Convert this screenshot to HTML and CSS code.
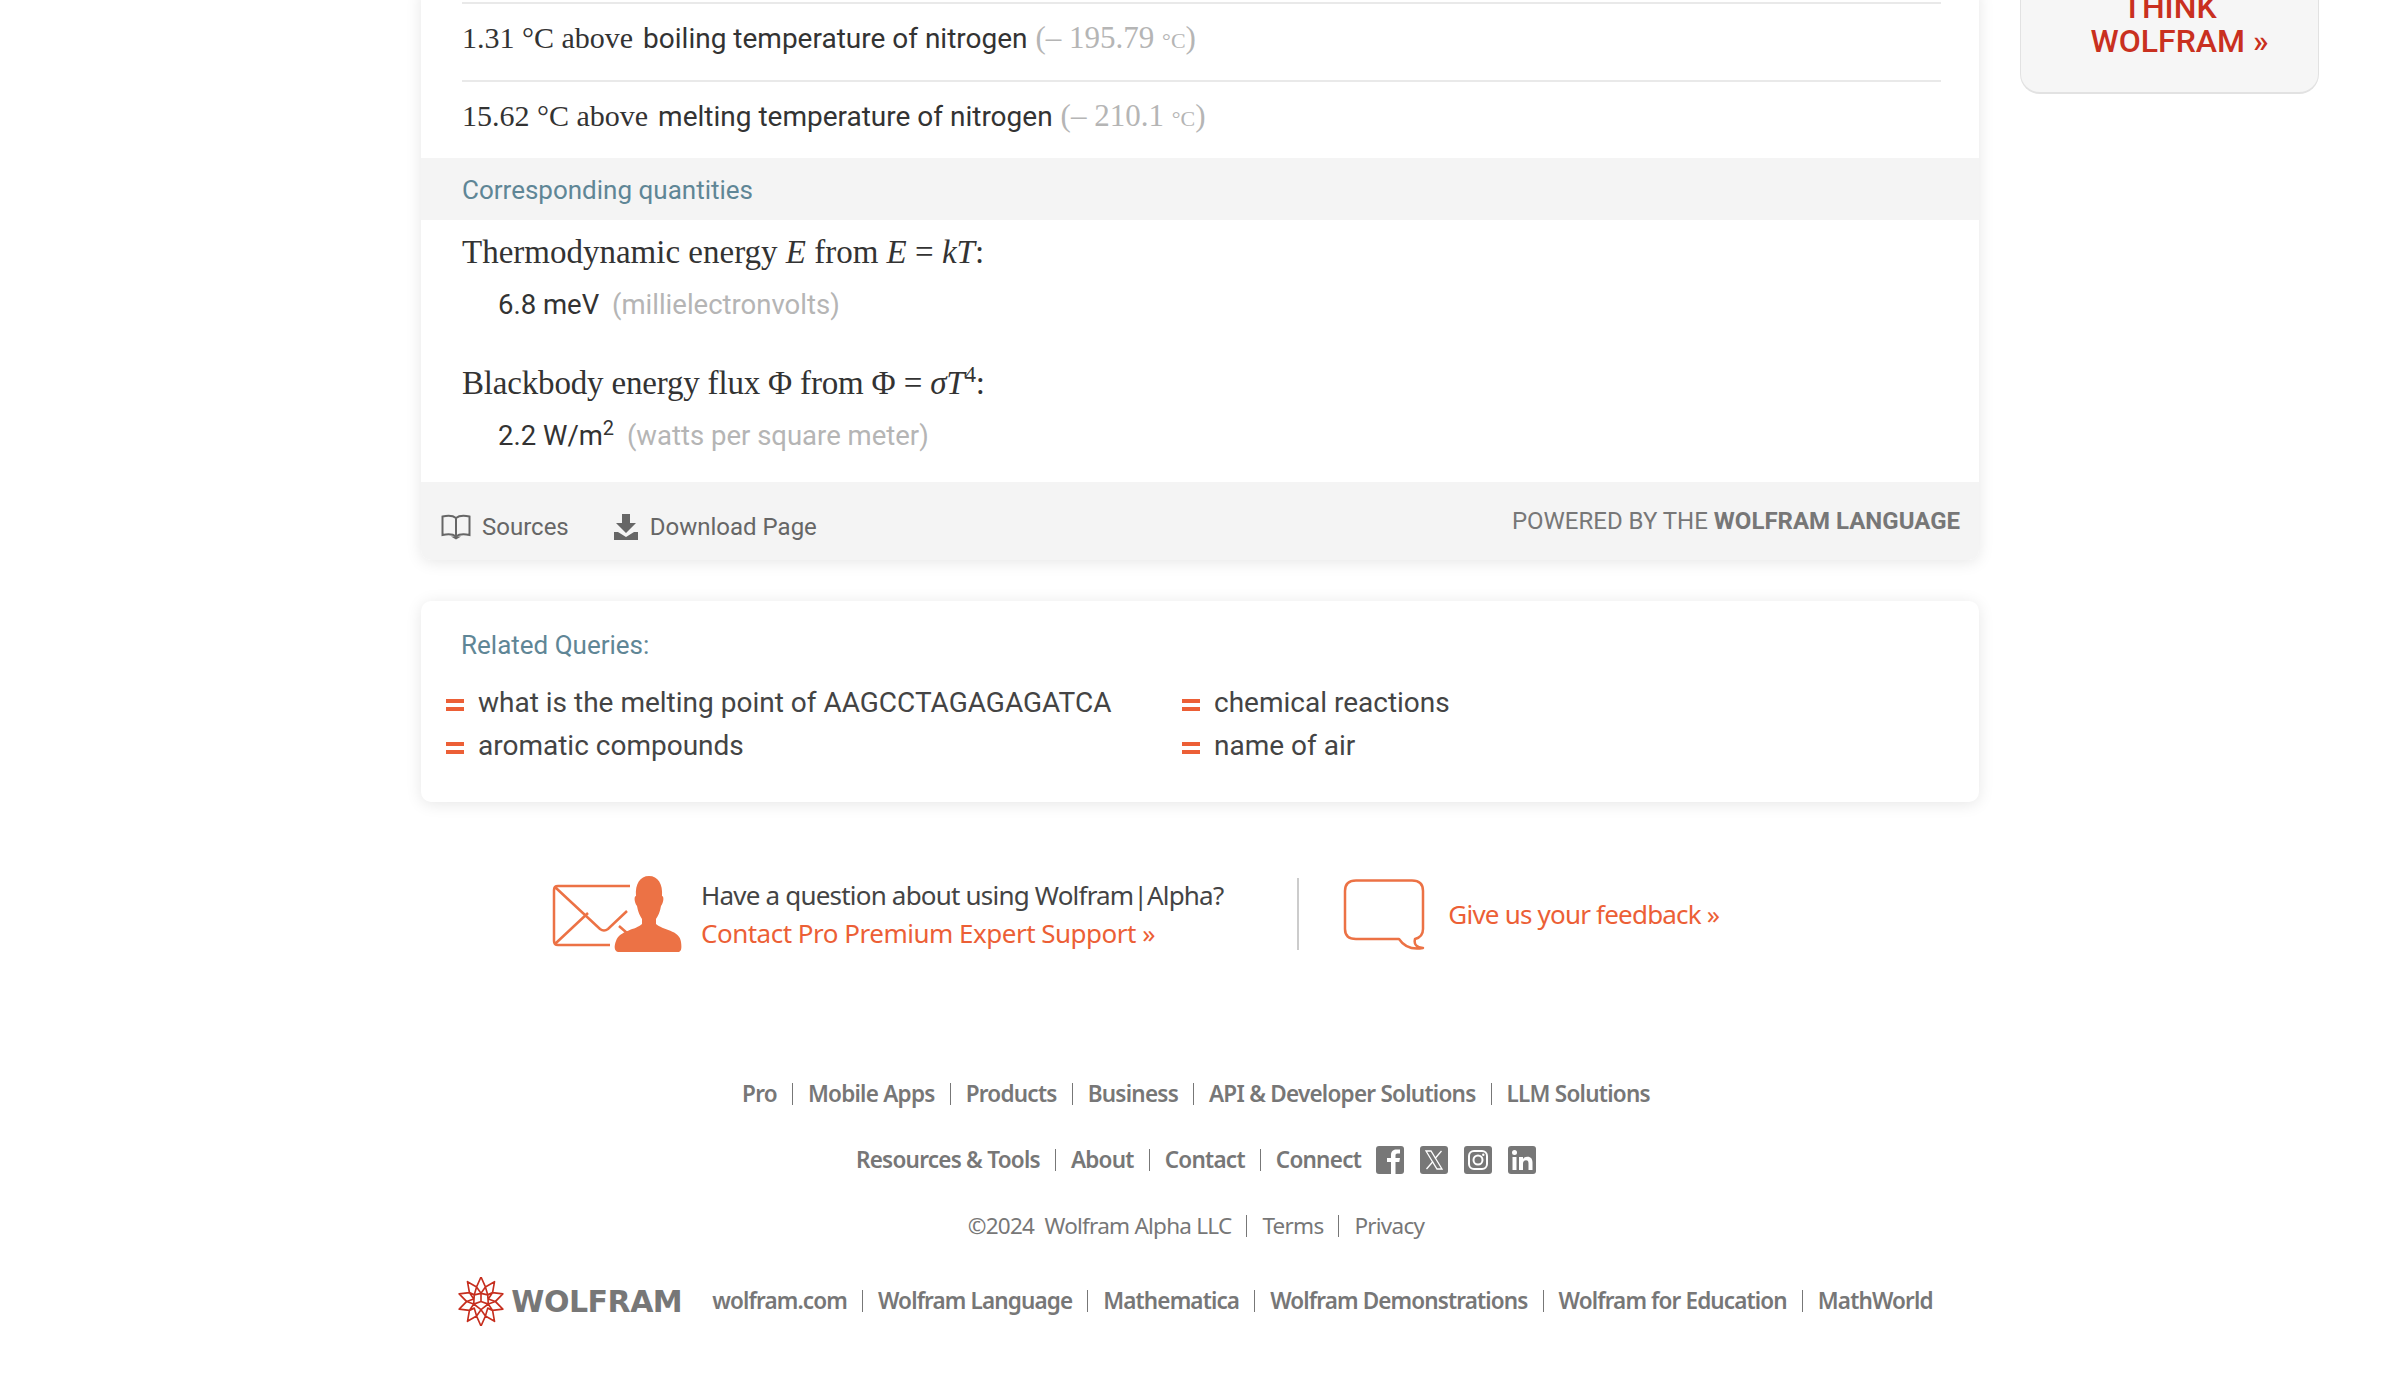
FILE: index.html
```html
<!DOCTYPE html>
<html lang="en">
<head>
  <meta charset="UTF-8">
  <title>Wolfram|Alpha</title>
  <link rel="stylesheet" href="styles.css">
</head>
<body>
  <div class="page">
    <div class="content">
      <main class="pod">
        <div class="rows">
          <p class="row"><span class="serif lead">1.31 °C above</span> boiling temperature of nitrogen <span class="serif muted">(– 195.79 <span class="unit">°C</span>)</span></p>
          <p class="row"><span class="serif lead">15.62 °C above</span> melting temperature of nitrogen <span class="serif muted">(– 210.1 <span class="unit">°C</span>)</span></p>
        </div>
        <h3 class="pod-title">Corresponding quantities</h3>
        <div class="quantities">
          <p class="formula">Thermodynamic energy <i>E</i> from <i>E</i> = <i>kT</i>:</p>
          <p class="value">6.8 meV <span class="muted">(millielectronvolts)</span></p>
          <p class="formula formula-next">Blackbody energy flux Φ from Φ = <i>σT</i><sup>4</sup>:</p>
          <p class="value">2.2 W/m<sup>2</sup> <span class="muted">(watts per square meter)</span></p>
        </div>
        <div class="pod-foot">
          <a class="foot-link">
            <svg width="30" height="26" viewBox="0 0 30 26"><path d="M15 4C12 1.500 6 1.500 1.500 2.500V21C6 20 12 20 15 22.500C18 20 24 20 28.500 21V2.500C24 1.500 18 1.500 15 4ZM15 4V22.500" fill="none" stroke="#666" stroke-width="2"/><path d="M10 22.500H20L15 25.500Z" fill="#666"/></svg>
            Sources
          </a>
          <a class="foot-link">
            <svg width="26" height="26" viewBox="0 0 26 26"><path d="M9 0H17V9H23L13 19L3 9H9Z M1 18H5L13 23L21 18H25V26H1Z" fill="#666"/></svg>
            Download Page
          </a>
          <span class="powered">POWERED BY THE <b>WOLFRAM LANGUAGE</b></span>
        </div>
      </main>

      <section class="related">
        <h3 class="related-title">Related Queries:</h3>
        <ul class="related-list">
          <li>what is the melting point of AAGCCTAGAGAGATCA</li>
          <li>chemical reactions</li>
          <li>aromatic compounds</li>
          <li>name of air</li>
        </ul>
      </section>

      <section class="support">
        <svg class="support-icon" width="130" height="77" viewBox="0 0 130 77">
          <path d="M78 10H6Q2 10 2 14V65Q2 69 6 69H58M4 12L48 53Q52 56 56 53L75 35M4 67L36 37M67 50L75 57" fill="none" stroke="#ec7245" stroke-width="2.500"/>
          <path d="M97 0C106 0 111 8 110 20C112 20 112 26 109 30C108 36 106 40 104 43V48C110 54 128 54 129 66C130 73 129 75 127 76H66C62 75 62 70 64 65C68 54 84 54 90 48V43C88 40 86 36 85 30C82 26 82 20 84 20C83 8 88 0 97 0Z" fill="#ec7245"/>
        </svg>
        <div class="support-text">
          <p>Have a question about using Wolfram|Alpha?</p>
          <a>Contact Pro Premium Expert Support »</a>
        </div>
        <div class="support-rule"></div>
        <svg class="bubble" width="82" height="71" viewBox="0 0 82 71">
          <path d="M13 1.500H69Q80 1.500 80 12V50Q80 58 72 60Q70 68 80 69Q64 72 56 60H13Q2 60 2 50V12Q2 1.500 13 1.500Z" fill="none" stroke="#ec7245" stroke-width="2.500" stroke-linejoin="round"/>
        </svg>
        <a class="feedback">Give us your feedback »</a>
      </section>

      <footer class="site-foot">
        <nav class="foot-line strong">
          <a>Pro</a><a>Mobile Apps</a><a>Products</a><a>Business</a><a>API &amp; Developer Solutions</a><a>LLM Solutions</a>
        </nav>
        <nav class="foot-line strong">
          <a>Resources &amp; Tools</a><a>About</a><a>Contact</a><a>Connect</a>
          <span class="social">
            <svg width="28" height="28" viewBox="0 0 28 28"><rect width="28" height="28" rx="3" fill="#777"/><path d="M15 28V16H11V12H15V9C15 5 17.500 3.500 20.500 3.500H24V7.500H21.500C20 7.500 19.500 8.200 19.500 9.500V12H24L23.300 16H19.500V28Z" fill="#fff"/></svg>
            <svg width="28" height="28" viewBox="0 0 28 28"><rect width="28" height="28" rx="3" fill="#777"/><path d="M6 5H11L22 23H17Z" fill="none" stroke="#fff" stroke-width="1.300"/><path d="M21.500 5L15 12.500M13 15.500L6.500 23" stroke="#fff" stroke-width="1.300"/></svg>
            <svg width="28" height="28" viewBox="0 0 28 28"><rect width="28" height="28" rx="3" fill="#777"/><rect x="5" y="5" width="18" height="18" rx="5" fill="none" stroke="#fff" stroke-width="2"/><circle cx="14" cy="14" r="4.500" fill="none" stroke="#fff" stroke-width="2"/><circle cx="19.300" cy="8.700" r="1.200" fill="#fff"/></svg>
            <svg width="28" height="28" viewBox="0 0 28 28"><rect width="28" height="28" rx="3" fill="#777"/><circle cx="6.500" cy="6.500" r="2.500" fill="#fff"/><path d="M4.500 11H8.500V24H4.500ZM11 11H15V13C16 11.500 17.500 10.700 19.500 10.700C23 10.700 24.500 13 24.500 16.500V24H20.500V17.500C20.500 15.500 19.800 14.300 18 14.300C16 14.300 15 15.700 15 17.500V24H11Z" fill="#fff"/></svg>
          </span>
        </nav>
        <nav class="foot-line">
          <span>©2024&nbsp; Wolfram Alpha LLC</span><a>Terms</a><a>Privacy</a>
        </nav>
        <nav class="foot-line strong brand-line">
          <span class="brand">
            <svg width="46" height="49" viewBox="0 0 48 48" preserveAspectRatio="none">
              <path d="M24 0L28.600 9.700L38.100 4.600L36.100 15.200L46.800 16.600L39 24L46.800 31.400L36.100 32.800L38.100 43.400L28.600 38.300L24 48L19.400 38.300L9.900 43.400L11.900 32.800L1.200 31.400L9 24L1.200 16.600L11.900 15.200L9.900 4.600L19.400 9.700Z M19.400 9.700L24 16L28.600 9.700 M28.600 9.700L31 17.500L36.100 15.200 M36.100 15.200L31.600 21.500L39 24L31.600 26.500L36.100 32.800L31 30.500L28.600 38.300L24 32L19.400 38.300L17 30.500L11.900 32.800L16.400 26.500L9 24L16.400 21.500L11.900 15.200L17 17.500L19.400 9.700 M24 16L31 17.500L31.600 26.500L24 32L16.400 26.500L17 17.500Z M24 16V24L31.600 26.500 M24 24L16.400 26.500" fill="none" stroke="#c62e1e" stroke-width="1.700" stroke-linejoin="round"/>
            </svg>
            <span class="brand-name">WOLFRAM</span>
          </span>
          <a>wolfram.com</a><a>Wolfram Language</a><a>Mathematica</a><a>Wolfram Demonstrations</a><a>Wolfram for Education</a><a>MathWorld</a>
        </nav>
      </footer>
    </div>

    <aside class="promo">
      <a>THINK<br><span class="promo-line">WOLFRAM »</span></a>
    </aside>
  </div>
</body>
</html>
```

FILE: styles.css
```css
html, body {
  margin: 0;
  height: 1398px;
  overflow: hidden;
  background: #fff;
}
body {
  font-family: Roboto, sans-serif;
  color: #333;
}
p, h3, ul {
  margin: 0;
  padding: 0;
}
a {
  color: inherit;
  text-decoration: none;
}

.page {
  display: flex;
  align-items: flex-start;
  margin-top: -10px;
  padding-left: 421px;
}
.content {
  width: 1558px;
}

/* result pod */
.pod {
  background: #fff;
  border-radius: 0 0 10px 10px;
  box-shadow: 0 2px 16px rgba(0, 0, 0, 0.1);
}
.rows {
  padding: 12px 38px 0 41px;
}
.row {
  height: 76px;
  border-top: 2px solid #e9e9e9;
  font-size: 28px;
  line-height: 68px;
  color: #333;
  white-space: nowrap;
}
.serif {
  font-family: "Liberation Serif", serif;
  font-size: 30px;
}
.lead {
  margin-right: 3px;
}
.muted {
  color: #b5b5b5;
}
.row .muted {
  margin-left: 1px;
  font-size: 31px;
}
.row .unit {
  font-size: 22px;
}
.pod-title {
  height: 62px;
  padding-left: 41px;
  background: #f4f4f4;
  font-size: 26px;
  font-weight: 400;
  line-height: 64px;
  color: #5f8696;
}
.quantities {
  height: 262px;
  padding: 12px 41px 0;
  box-sizing: border-box;
}
.formula {
  height: 40px;
  font-family: "Liberation Serif", serif;
  font-size: 33px;
  line-height: 40px;
  color: #333;
}
.formula-next {
  margin-top: 38px;
  letter-spacing: -0.18px;
}
.formula sup {
  font-size: 23px;
  line-height: 0;
}
.value {
  height: 40px;
  margin-top: 13px;
  padding-left: 36px;
  font-size: 27.500px;
  line-height: 40px;
  color: #333;
}
.value sup {
  font-size: 20px;
  line-height: 0;
}
.value .muted {
  margin-left: 6px;
}
.pod-foot {
  display: flex;
  align-items: center;
  height: 78px;
  padding: 0 19px 0 20px;
  background: #f4f4f4;
  border-radius: 0 0 10px 10px;
  font-size: 24px;
  color: #666;
}
.foot-link {
  display: flex;
  align-items: center;
  gap: 11px;
  margin-right: 44px;
  padding-top: 12px;
}
.powered {
  margin-left: auto;
  font-size: 24px;
  color: #777;
}

/* related queries */
.related {
  margin-top: 41px;
  height: 201px;
  padding: 28px 25px 0;
  box-sizing: border-box;
  background: #fff;
  border-radius: 10px;
  box-shadow: 0 2px 16px rgba(0, 0, 0, 0.1);
}
.related-title {
  padding-left: 15px;
  font-size: 26px;
  font-weight: 400;
  line-height: 32px;
  color: #5f8696;
}
.related-list {
  display: grid;
  grid-template-columns: 736px 1fr;
  grid-auto-rows: 43px;
  margin-top: 20px;
  list-style: none;
  font-size: 28px;
  line-height: 43px;
  color: #444;
}
.related-list li {
  position: relative;
  padding-left: 32px;
}
.related-list li::before {
  content: "";
  position: absolute;
  left: 0;
  top: 18px;
  width: 18px;
  height: 4px;
  border-top: 4px solid #ec5f36;
  border-bottom: 4px solid #ec5f36;
}

/* support strip */
.support {
  display: flex;
  align-items: center;
  height: 80px;
  margin-top: 72px;
  padding-left: 131px;
  font-family: "Noto Sans", sans-serif;
  font-size: 26px;
  color: #444;
}
.support-text {
  margin-left: 19px;
  line-height: 38px;
  letter-spacing: -0.8px;
  white-space: nowrap;
}
.support-text a {
  letter-spacing: -0.5px;
}
.support-text a,
.feedback {
  color: #ec5f36;
}
.support-rule {
  width: 2px;
  height: 72px;
  margin-left: 74px;
  background: #ccc;
}
.bubble {
  margin-left: 44px;
}
.feedback {
  margin-left: 23px;
  letter-spacing: -0.8px;
}

/* site footer */
.site-foot {
  margin-top: 126px;
  font-family: "Noto Sans", sans-serif;
  font-size: 22.500px;
  color: #777;
}
.foot-line {
  display: flex;
  justify-content: center;
  align-items: center;
  height: 28px;
  margin-bottom: 38px;
  padding-right: 8px;
  letter-spacing: -0.75px;
  white-space: nowrap;
}
.foot-line > a,
.foot-line > span:not(.social):not(.brand) {
  padding: 0 15px;
  line-height: 22px;
}
.foot-line > a + a,
.foot-line > span:not(.social):not(.brand) + a {
  border-left: 1px solid #777;
}
.foot-line > .brand + a {
  padding-left: 30px;
}
.strong {
  font-weight: 600;
}
.social {
  display: flex;
  gap: 16px;
  margin-right: 15px;
}
.brand-line {
  margin-top: 47px;
  padding-right: 0;
  padding-left: 6px;
  letter-spacing: -0.87px;
}
.brand {
  display: flex;
  align-items: center;
  gap: 7px;
}
.brand-name {
  font-family: "DejaVu Sans", sans-serif;
  font-size: 30px;
  font-weight: 700;
  letter-spacing: -0.5px;
  color: #777;
}

/* side promo */
.promo {
  width: 299px;
  height: 104px;
  margin-left: 41px;
  box-sizing: border-box;
  background: #f6f6f6;
  border: 1px solid #e2e2e2;
  border-top: 0;
  border-bottom-width: 2px;
  border-radius: 0 0 20px 20px;
  font-size: 32px;
  font-weight: 500;
  line-height: 34px;
  color: #c93020;
  text-align: center;
}
.promo-line {
  padding-left: 20px;
}
```
